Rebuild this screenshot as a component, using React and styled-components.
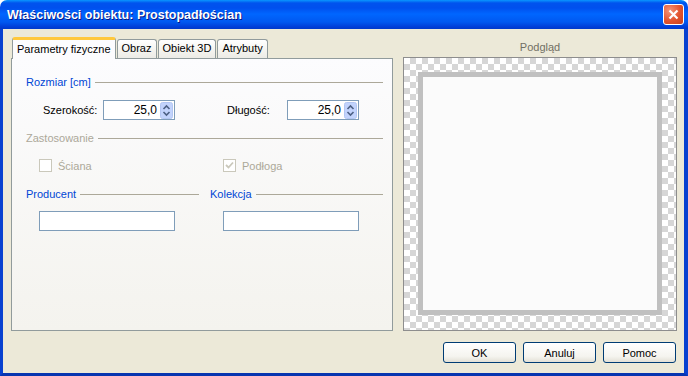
import React from 'react';
import styled, { createGlobalStyle } from 'styled-components';

const GlobalStyle = createGlobalStyle`
  html, body {
    margin: 0;
    padding: 0;
    background: #ffffff;
  }
  body {
    font-family: "Liberation Sans", Arial, sans-serif;
    font-size: 11px;
  }
`;

const Window = styled.div`
  width: 688px;
  height: 376px;
  display: flex;
  flex-direction: column;
  overflow: hidden;
`;

const TitleBar = styled.div`
  height: 29px;
  flex: none;
  display: flex;
  align-items: center;
  justify-content: space-between;
  padding: 0 4px 0 7px;
  border-radius: 7px 7px 0 0;
  background: linear-gradient(
    to bottom,
    #0997ff 0px,
    #0053ee 3px,
    #0050ee 8px,
    #0066ff 14px,
    #0058f0 22px,
    #003dd7 27px,
    #0039c9 29px
  );
  box-sizing: border-box;
`;

const Title = styled.span`
  color: #ffffff;
  font-family: "Liberation Sans", Arial, sans-serif;
  font-weight: bold;
  font-size: 12.5px;
  text-shadow: 1px 1px 0 #0a1883;
`;

const CloseButton = styled.div`
  width: 21px;
  height: 21px;
  box-sizing: border-box;
  border: 1px solid #ffffff;
  border-radius: 3px;
  background: radial-gradient(circle at 30% 30%, #f39478 0%, #e2532e 55%, #c7411d 100%);
  display: flex;
  align-items: center;
  justify-content: center;
`;

const Body = styled.div`
  flex: 1;
  display: flex;
  flex-direction: column;
  background: #ece9d8;
  border-left: 3px solid #0841d0;
  border-right: 4px solid #0841d0;
  border-bottom: 3px solid #0735b0;
  padding: 8px 7px 0 8px;
  box-sizing: border-box;
`;

const MainRow = styled.div`
  display: flex;
  gap: 10px;
`;

const LeftCol = styled.div`
  width: 382px;
  display: flex;
  flex-direction: column;
`;

const TabStrip = styled.div`
  height: 21px;
  display: flex;
  align-items: flex-end;
  padding-left: 1px;
  position: relative;
  z-index: 1;
`;

const Tab = styled.div`
  box-sizing: border-box;
  height: ${p => (p.active ? '22px' : '19px')};
  margin: ${p => (p.active ? '0 1px -1px 0' : '0 1px 0 0')};
  padding: ${p => (p.active ? '3px 4px 0 4px' : '2px 4px 0 4px')};
  border: 1px solid #919b9c;
  border-bottom: none;
  border-top: ${p => (p.active ? '3px solid #ffc83c' : '1px solid #919b9c')};
  border-radius: 3px 3px 0 0;
  background: ${p => (p.active ? '#fcfcfe' : 'linear-gradient(#ffffff, #f4f3ee 60%, #ecebe6)')};
  color: #000000;
  white-space: nowrap;
  line-height: 13px;
`;

const Panel = styled.div`
  height: 273px;
  box-sizing: border-box;
  border: 1px solid #919b9c;
  background: linear-gradient(to bottom, #fcfcfe, #f4f3ee);
  padding: 16px 9px 0 14px;
  display: flex;
  flex-direction: column;
`;

const Heading = styled.div`
  display: flex;
  align-items: center;
  height: 14px;
  gap: 4px;
  margin-top: ${p => p.mt || 0}px;
  color: ${p => (p.disabled ? '#aca899' : '#0046d5')};
`;

const Line = styled.div`
  flex: 1;
  height: 1px;
  background: #aca899;
`;

const Grid = styled.div`
  display: grid;
  grid-template-columns: 173px 173px;
  column-gap: 11px;
  margin-top: ${p => p.mt || 0}px;
`;

const SpinField = styled.div`
  display: flex;
  align-items: center;
  padding-left: 17px;
`;

const Label = styled.span`
  width: 60px;
  color: #000000;
`;

const SpinBox = styled.div`
  width: 72px;
  height: 20px;
  box-sizing: border-box;
  border: 1px solid #7f9db9;
  background: #ffffff;
  display: flex;
  align-items: center;
  padding: 0 1px 0 0;
`;

const SpinValue = styled.span`
  flex: 1;
  text-align: right;
  padding-right: 3px;
  font-size: 12px;
  color: #000000;
`;

const CheckField = styled.label`
  display: flex;
  align-items: center;
  gap: 6px;
  padding-left: 13px;
  height: 13px;
  color: #aca899;
`;

const Box = styled.span`
  width: 13px;
  height: 13px;
  box-sizing: border-box;
  border: 1px solid #cac8bb;
  background: #ffffff;
  display: flex;
  align-items: center;
  justify-content: center;
`;

const TextBox = styled.div`
  width: 136px;
  height: 20px;
  box-sizing: border-box;
  border: 1px solid #7f9db9;
  background: #ffffff;
  margin-left: 13px;
`;

const RightCol = styled.div`
  width: 274px;
  display: flex;
  flex-direction: column;
`;

const PreviewLabel = styled.div`
  margin-top: 3px;
  height: 14px;
  line-height: 14px;
  text-align: center;
  color: #716f64;
`;

const PreviewFrame = styled.div`
  margin-top: 3px;
  height: 274px;
  box-sizing: border-box;
  border: 1px solid #8e8e8e;
  padding: 14px 14px 15px 14px;
  display: flex;
  background-color: #ffffff;
  background-image:
    linear-gradient(45deg, #d6d6d6 25%, transparent 25%, transparent 75%, #d6d6d6 75%),
    linear-gradient(45deg, #d6d6d6 25%, transparent 25%, transparent 75%, #d6d6d6 75%);
  background-size: 12px 12px;
  background-position: 0 0, 6px 6px;
`;

const PreviewFloor = styled.div`
  flex: 1;
  border: 5px solid #c0c0c0;
  background: #fbfbfb;
`;

const ButtonRow = styled.div`
  display: flex;
  justify-content: flex-end;
  gap: 7px;
  margin-top: 11px;
  padding-right: 1px;
`;

const Button = styled.div`
  width: 73px;
  height: 21px;
  box-sizing: border-box;
  border: 1px solid #003c74;
  border-radius: 3px;
  background: linear-gradient(to bottom, #ffffff, #f5f4ef 70%, #e3e0d6);
  display: flex;
  align-items: center;
  justify-content: center;
  color: #000000;
`;

const SpinArrows = () => (
  <svg width="13" height="17" viewBox="0 0 13 17">
    <rect x="0.5" y="0.5" width="12" height="16" rx="2" fill="#c2d3fc" stroke="#b3c6f2" />
    <path d="M3.5 7 L6.5 4 L9.5 7" fill="none" stroke="#4d6185" strokeWidth="1.6" />
    <path d="M3.5 10 L6.5 13 L9.5 10" fill="none" stroke="#4d6185" strokeWidth="1.6" />
  </svg>
);

const Spin = ({ label, value }) => (
  <SpinField>
    <Label>{label}</Label>
    <SpinBox>
      <SpinValue>{value}</SpinValue>
      <SpinArrows />
    </SpinBox>
  </SpinField>
);

const Check = ({ label, checked }) => (
  <CheckField>
    <Box>
      {checked && (
        <svg width="9" height="9" viewBox="0 0 9 9">
          <path d="M1 4 L3.5 6.5 L8 1.5" fill="none" stroke="#cac8bb" strokeWidth="1.8" />
        </svg>
      )}
    </Box>
    {label}
  </CheckField>
);

const App = () => (
  <Window>
    <GlobalStyle />
    <TitleBar>
      <Title>Właściwości obiektu: Prostopadłościan</Title>
      <CloseButton>
        <svg width="11" height="11" viewBox="0 0 11 11">
          <path d="M1.5 1.5 L9.5 9.5 M9.5 1.5 L1.5 9.5" stroke="#ffffff" strokeWidth="2.2" />
        </svg>
      </CloseButton>
    </TitleBar>
    <Body>
      <MainRow>
        <LeftCol>
          <TabStrip>
            <Tab active>Parametry fizyczne</Tab>
            <Tab>Obraz</Tab>
            <Tab>Obiekt 3D</Tab>
            <Tab>Atrybuty</Tab>
          </TabStrip>
          <Panel>
            <Heading>
              Rozmiar [cm]
              <Line />
            </Heading>
            <Grid mt={11}>
              <Spin label="Szerokość:" value="25,0" />
              <Spin label="Długość:" value="25,0" />
            </Grid>
            <Heading disabled mt={11}>
              Zastosowanie
              <Line />
            </Heading>
            <Grid mt={14}>
              <Check label="Ściana" />
              <Check label="Podłoga" checked />
            </Grid>
            <Grid mt={15}>
              <Heading>
                Producent
                <Line />
              </Heading>
              <Heading>
                Kolekcja
                <Line />
              </Heading>
            </Grid>
            <Grid mt={10}>
              <TextBox />
              <TextBox />
            </Grid>
          </Panel>
        </LeftCol>
        <RightCol>
          <PreviewLabel>Podgląd</PreviewLabel>
          <PreviewFrame>
            <PreviewFloor />
          </PreviewFrame>
        </RightCol>
      </MainRow>
      <ButtonRow>
        <Button>OK</Button>
        <Button>Anuluj</Button>
        <Button>Pomoc</Button>
      </ButtonRow>
    </Body>
  </Window>
);

export default App;
